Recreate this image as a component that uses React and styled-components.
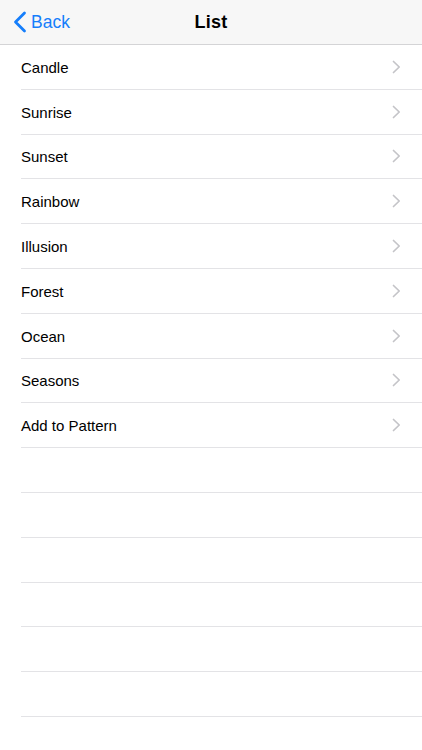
import React from "react";
import styled, { createGlobalStyle } from "styled-components";

const GlobalStyle = createGlobalStyle`
  html, body {
    margin: 0;
    padding: 0;
    background: #ffffff;
    font-family: "Liberation Sans", Arial, sans-serif;
  }
  * {
    box-sizing: border-box;
  }
`;

const Page = styled.div`
  width: 422px;
  height: 750px;
  overflow: hidden;
  background: #ffffff;
`;

const NavBar = styled.div`
  height: 45px;
  background: #f7f7f7;
  border-bottom: 1px solid #d4d4d6;
  display: grid;
  grid-template-columns: 1fr auto 1fr;
  align-items: center;
`;

const BackButton = styled.div`
  display: flex;
  align-items: center;
  gap: 4px;
  padding-left: 13px;
  color: #157efb;
  font-size: 17.5px;
`;

const Title = styled.div`
  font-size: 18px;
  font-weight: 700;
  color: #000000;
  letter-spacing: 0.2px;
`;

const ListBody = styled.div`
  display: flex;
  flex-direction: column;
`;

const Row = styled.div`
  height: 44.8px;
  margin-left: 21px;
  padding-right: 21px;
  border-bottom: 1px solid #e3e3e6;
  display: flex;
  align-items: center;
  justify-content: space-between;
`;

const Label = styled.span`
  font-size: 15px;
  color: #000000;
  padding-top: 1px;
`;

const BackChevron = () => (
  <svg width="14" height="22" viewBox="0 0 14 22">
    <path
      d="M11.5 2 L2.5 11 L11.5 20"
      fill="none"
      stroke="#157efb"
      strokeWidth="2.8"
      strokeLinecap="round"
      strokeLinejoin="round"
    />
  </svg>
);

const Disclosure = () => (
  <svg width="9" height="14" viewBox="0 0 9 14">
    <path
      d="M1.5 1.5 L7.2 7 L1.5 12.5"
      fill="none"
      stroke="#c4c4c8"
      strokeWidth="1.7"
      strokeLinecap="round"
      strokeLinejoin="round"
    />
  </svg>
);

const items = [
  "Candle",
  "Sunrise",
  "Sunset",
  "Rainbow",
  "Illusion",
  "Forest",
  "Ocean",
  "Seasons",
  "Add to Pattern",
];

export default function App() {
  const empty = Array.from({ length: 6 });
  return (
    <>
      <GlobalStyle />
      <Page>
        <NavBar>
          <BackButton>
            <BackChevron />
            <span>Back</span>
          </BackButton>
          <Title>List</Title>
          <div />
        </NavBar>
        <ListBody>
          {items.map((item) => (
            <Row key={item}>
              <Label>{item}</Label>
              <Disclosure />
            </Row>
          ))}
          {empty.map((_, i) => (
            <Row key={"empty-" + i} />
          ))}
        </ListBody>
      </Page>
    </>
  );
}
